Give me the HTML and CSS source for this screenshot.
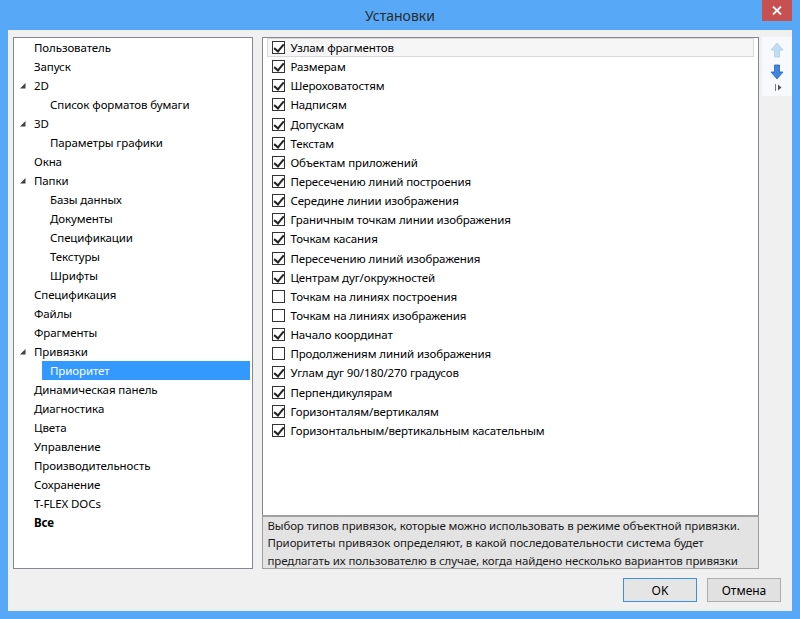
FILE: index.html
```html
<!DOCTYPE html>
<html lang="ru">
<head>
<meta charset="utf-8">
<title>Установки</title>
<link rel="stylesheet" href="styles.css">
</head>
<body>
<div class="window">
  <div class="titlebar">
    <span class="title">Установки</span>
    <div class="close">
      <svg width="10" height="9" viewBox="0 0 10 9"><path d="M1 0.5 L9 8.5 M9 0.5 L1 8.5" stroke="#fff" stroke-width="1.8"/></svg>
    </div>
  </div>
  <div class="client">
    <div class="main">
      <div class="tree">
        <div class="node l0">Пользователь</div>
        <div class="node l0">Запуск</div>
        <div class="node l0 exp"><svg class="tri" width="6" height="6" viewBox="0 0 6 6"><path d="M5.5 0 L5.5 5.5 L0 5.5 Z" fill="#404040"/></svg>2D</div>
        <div class="node l1">Список форматов бумаги</div>
        <div class="node l0 exp"><svg class="tri" width="6" height="6" viewBox="0 0 6 6"><path d="M5.5 0 L5.5 5.5 L0 5.5 Z" fill="#404040"/></svg>3D</div>
        <div class="node l1">Параметры графики</div>
        <div class="node l0">Окна</div>
        <div class="node l0 exp"><svg class="tri" width="6" height="6" viewBox="0 0 6 6"><path d="M5.5 0 L5.5 5.5 L0 5.5 Z" fill="#404040"/></svg>Папки</div>
        <div class="node l1">Базы данных</div>
        <div class="node l1">Документы</div>
        <div class="node l1">Спецификации</div>
        <div class="node l1">Текстуры</div>
        <div class="node l1">Шрифты</div>
        <div class="node l0">Спецификация</div>
        <div class="node l0">Файлы</div>
        <div class="node l0">Фрагменты</div>
        <div class="node l0 exp"><svg class="tri" width="6" height="6" viewBox="0 0 6 6"><path d="M5.5 0 L5.5 5.5 L0 5.5 Z" fill="#404040"/></svg>Привязки</div>
        <div class="node l1 selected"><span class="sel">Приоритет</span></div>
        <div class="node l0">Динамическая панель</div>
        <div class="node l0">Диагностика</div>
        <div class="node l0">Цвета</div>
        <div class="node l0">Управление</div>
        <div class="node l0">Производительность</div>
        <div class="node l0">Сохранение</div>
        <div class="node l0">T-FLEX DOCs</div>
        <div class="node l0 bold">Все</div>
      </div>
      <div class="right">
        <div class="list">
          <div class="row focus"><span class="cb on"></span>Узлам фрагментов</div>
          <div class="row"><span class="cb on"></span>Размерам</div>
          <div class="row"><span class="cb on"></span>Шероховатостям</div>
          <div class="row"><span class="cb on"></span>Надписям</div>
          <div class="row"><span class="cb on"></span>Допускам</div>
          <div class="row"><span class="cb on"></span>Текстам</div>
          <div class="row"><span class="cb on"></span>Объектам приложений</div>
          <div class="row"><span class="cb on"></span>Пересечению линий построения</div>
          <div class="row"><span class="cb on"></span>Середине линии изображения</div>
          <div class="row"><span class="cb on"></span>Граничным точкам линии изображения</div>
          <div class="row"><span class="cb on"></span>Точкам касания</div>
          <div class="row"><span class="cb on"></span>Пересечению линий изображения</div>
          <div class="row"><span class="cb on"></span>Центрам дуг/окружностей</div>
          <div class="row"><span class="cb"></span>Точкам на линиях построения</div>
          <div class="row"><span class="cb"></span>Точкам на линиях изображения</div>
          <div class="row"><span class="cb on"></span>Начало координат</div>
          <div class="row"><span class="cb"></span>Продолжениям линий изображения</div>
          <div class="row"><span class="cb on"></span>Углам дуг 90/180/270 градусов</div>
          <div class="row"><span class="cb on"></span>Перпендикулярам</div>
          <div class="row"><span class="cb on"></span>Горизонталям/вертикалям</div>
          <div class="row"><span class="cb on"></span>Горизонтальным/вертикальным касательным</div>
        </div>
        <div class="desc">Выбор типов привязок, которые можно использовать в режиме объектной привязки. Приоритеты привязок определяют, в какой последовательности система будет предлагать их пользователю в случае, когда найдено несколько вариантов привязки</div>
      </div>
      <div class="strip">
        <div class="arrows">
          <svg width="14" height="16" viewBox="0 0 14 16"><path d="M7 1 L13 8 L9.5 8 L9.5 15 L4.5 15 L4.5 8 L1 8 Z" fill="#c2dcf4" stroke="#a9cbec" stroke-width="0.8"/></svg>
          <svg width="14" height="16" viewBox="0 0 14 16"><path d="M4.5 1 L9.5 1 L9.5 8 L13 8 L7 15 L1 8 L4.5 8 Z" fill="#3f86de" stroke="#2a63b8" stroke-width="0.8"/></svg>
          <div class="more"><svg width="7" height="7" viewBox="0 0 7 7"><path d="M0.5 0 L0.5 7" stroke="#7a7a7a" stroke-width="1"/><path d="M3 0.5 L6.5 3.5 L3 6.5 Z" fill="#555"/></svg></div>
        </div>
      </div>
    </div>
    <div class="buttons">
      <button class="btn default">OK</button>
      <button class="btn">Отмена</button>
    </div>
  </div>
</div>
</body>
</html>
```
FILE: styles.css
```css
* { box-sizing: border-box; }
html, body { margin: 0; padding: 0; }
body {
  width: 800px;
  height: 619px;
  overflow: hidden;
  font-family: "Noto Sans", "Open Sans", "DejaVu Sans", sans-serif;
  font-size: 11.5px;
  letter-spacing: -0.1px;
  color: #000;
  background: #57a9f7;
}
.window {
  width: 800px;
  height: 619px;
  background: #57a9f7;
  padding: 0 8px 8px 8px;
  display: flex;
  flex-direction: column;
}
.titlebar {
  height: 30px;
  position: relative;
  display: flex;
  align-items: center;
  justify-content: center;
}
.title {
  font-size: 14px;
  letter-spacing: 0;
  color: #2b2b2b;
  margin-top: 1px;
}
.close {
  position: absolute;
  right: 0;
  top: 0;
  width: 30px;
  height: 21px;
  background: #c75050;
  display: flex;
  align-items: center;
  justify-content: center;
}
.client {
  flex: 1;
  background: #f0f0f0;
  padding: 7px 0 9px 5px;
  display: flex;
  flex-direction: column;
}
.main {
  display: flex;
  height: 532px;
}
.tree {
  width: 241px;
  height: 532px;
  border: 1px solid #828790;
  background: #fff;
  padding-right: 1px;
}
.node {
  height: 19px;
  line-height: 19px;
  white-space: nowrap;
  position: relative;
}
.node.l0 { padding-left: 20px; }
.node.l1 { padding-left: 36px; }
.node .tri {
  position: absolute;
  left: 6px;
  top: 7px;
}
.node.bold { font-weight: bold; }
.node.selected { padding-left: 28px; padding-right: 1px; }
.sel {
  display: block;
  background: #3399ff;
  color: #fff;
  padding-left: 8px;
  height: 19px;
}
.right {
  margin-left: 9px;
  width: 498px;
  display: flex;
  flex-direction: column;
}
.list {
  flex: 1;
  border: 1px solid #828790;
  border-bottom: none;
  background: #fff;
  padding: 0 4px;
}
.row {
  height: 19.15px;
  display: flex;
  align-items: center;
  white-space: nowrap;
  padding-left: 4px;
  border: 1px solid transparent;
}
.row.focus {
  background: #f6f6f6;
  border-color: #d8d8d8;
}
.cb {
  width: 13px;
  height: 13px;
  border: 1px solid #333;
  background: #fff;
  margin-right: 5px;
  flex: none;
  position: relative;
}
.cb.on::after {
  content: "";
  position: absolute;
  left: 3px;
  top: 0px;
  width: 4px;
  height: 8px;
  border-right: 2px solid #222;
  border-bottom: 2px solid #222;
  transform: rotate(40deg);
}
.desc {
  height: 54px;
  flex: none;
  background: #e3e3e3;
  border: 1px solid #a0a0a0;
  border-top: 2px solid #a0a0a0;
  padding: 0 3px 0 4px;
  line-height: 17.4px;
  color: #1a1a1a;
}
.strip {
  width: 30px;
  margin-left: 3px;
}
.arrows {
  height: 59px;
  background: #f7f9fc;
  display: flex;
  flex-direction: column;
  align-items: center;
  padding-top: 5px;
  gap: 6px;
}
.arrows svg { display: block; }
.more {
  align-self: flex-end;
  margin-right: 10px;
  margin-top: -2px;
}
.buttons {
  display: flex;
  justify-content: flex-end;
  gap: 10px;
  margin-top: 9px;
  padding-right: 11px;
}
.btn {
  width: 74px;
  height: 24px;
  font-family: inherit;
  font-size: 12px;
  color: #000;
  background: #e1e1e1;
  border: 1px solid #adadad;
  padding: 0;
}
.btn.default {
  border-color: #3c8ee6;
  background: #e5e5e5;
}
```
